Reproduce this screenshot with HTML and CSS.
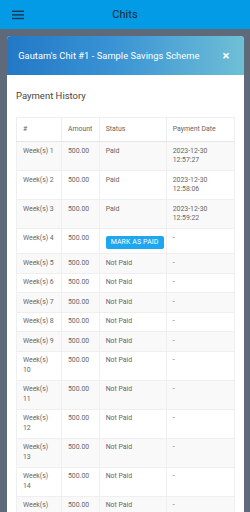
FILE: index.html
```html
<!DOCTYPE html>
<html>
<head>
<meta charset="utf-8">
<link rel="stylesheet" href="styles.css">
</head>
<body>
<header class="topbar">
  <button class="menu-btn" aria-label="Menu">
    <svg width="12" height="10" viewBox="0 0 12 10"><rect x="0" y="0.6" width="12" height="1.4" fill="#1b3550"/><rect x="0" y="4.2" width="12" height="1.4" fill="#1b3550"/><rect x="0" y="7.8" width="12" height="1.4" fill="#1b3550"/></svg>
  </button>
  <h1 class="topbar-title">Chits</h1>
</header>
<div class="overlay">
  <div class="modal">
    <div class="modal-header">
      <h2 class="modal-title">Gautam's Chit #1 - Sample Savings Scheme</h2>
      <span class="close">&times;</span>
    </div>
    <div class="modal-body">
      <h3 class="section-title">Payment History</h3>
      <table class="history">
        <colgroup>
          <col class="c1"><col class="c2"><col class="c3"><col class="c4">
        </colgroup>
        <thead>
          <tr><th>#</th><th>Amount</th><th>Status</th><th>Payment Date</th></tr>
        </thead>
        <tbody>
          <tr><td>Week(s) 1</td><td>500.00</td><td>Paid</td><td>2023-12-30 12:57:27</td></tr>
          <tr><td>Week(s) 2</td><td>500.00</td><td>Paid</td><td>2023-12-30 12:58:06</td></tr>
          <tr><td>Week(s) 3</td><td>500.00</td><td>Paid</td><td>2023-12-30 12:59:22</td></tr>
          <tr><td>Week(s) 4</td><td>500.00</td><td><button class="pay-btn">MARK AS PAID</button></td><td>-</td></tr>
          <tr><td>Week(s) 5</td><td>500.00</td><td>Not Paid</td><td>-</td></tr>
          <tr><td>Week(s) 6</td><td>500.00</td><td>Not Paid</td><td>-</td></tr>
          <tr><td>Week(s) 7</td><td>500.00</td><td>Not Paid</td><td>-</td></tr>
          <tr><td>Week(s) 8</td><td>500.00</td><td>Not Paid</td><td>-</td></tr>
          <tr><td>Week(s) 9</td><td>500.00</td><td>Not Paid</td><td>-</td></tr>
          <tr><td>Week(s) 10</td><td>500.00</td><td>Not Paid</td><td>-</td></tr>
          <tr><td>Week(s) 11</td><td>500.00</td><td>Not Paid</td><td>-</td></tr>
          <tr><td>Week(s) 12</td><td>500.00</td><td>Not Paid</td><td>-</td></tr>
          <tr><td>Week(s) 13</td><td>500.00</td><td>Not Paid</td><td>-</td></tr>
          <tr><td>Week(s) 14</td><td>500.00</td><td>Not Paid</td><td>-</td></tr>
          <tr><td>Week(s) 15</td><td>500.00</td><td>Not Paid</td><td>-</td></tr>
        </tbody>
      </table>
    </div>
  </div>
</div>
</body>
</html>
```
FILE: styles.css
```css
* { box-sizing: border-box; }
html, body { margin: 0; padding: 0; }
body {
  width: 250px;
  height: 512px;
  overflow: hidden;
  font-family: Roboto, "Noto Sans", Arial, sans-serif;
  background: #5e6979;
}
.topbar {
  height: 29px;
  background: #039be5;
  display: flex;
  align-items: center;
}
.menu-btn {
  border: 0;
  background: none;
  padding: 0;
  margin: 0 0 0 12px;
  width: 12px;
  height: 10px;
  display: flex;
}
.topbar-title {
  margin: 0;
  flex: 1;
  text-align: center;
  font-size: 11px;
  font-weight: 400;
  color: #14283c;
  padding-right: 24px;
  line-height: 29px;
  letter-spacing: 0.1px;
}
.overlay {
  padding: 7px 6.5px 0 6.7px;
}
.modal {
  background: #fff;
  border-radius: 4px 4px 0 0;
  overflow: hidden;
  height: 480px;
}
.modal-header {
  height: 39px;
  background: linear-gradient(90deg, #2278c6 0%, #3a93d4 45%, #6fbfd6 100%);
  display: flex;
  align-items: center;
  padding: 0 14px 0 11.5px;
}
.modal-title {
  margin: 0;
  flex: 1;
  color: #fff;
  font-size: 9.3px;
  font-weight: 400;
  letter-spacing: 0.05px;
}
.close {
  color: #fff;
  font-size: 13px;
  font-weight: 700;
  line-height: 1;
}
.modal-body {
  padding: 15px 9.3px 0 9.3px;
}
.section-title {
  margin: 0 0 15px;
  font-size: 9.5px;
  line-height: 12px;
  font-weight: 400;
  color: #454545;
}
.history {
  width: 218px;
  border-collapse: collapse;
  table-layout: fixed;
  font-size: 6.9px;
  color: #666;
  border: 1px solid #eeeeee;
}
.c1 { width: 45px; }
.c2 { width: 37.7px; }
.c3 { width: 67px; }
.c4 { width: 68.3px; }
.history th {
  text-align: left;
  font-weight: 400;
  padding: 6.75px 6px;
  line-height: 9.5px;
  border: 1px solid #eeeeee;
  border-bottom: 1px solid #e6e6e6;
}
.history td {
  padding: 4.5px 6px;
  line-height: 9.5px;
  vertical-align: top;
  border: 1px solid #efefef;
}
.history tbody tr:nth-child(odd) td { background: #f9f9f9; }
.pay-btn {
  display: block;
  margin: 2px 0 0;
  height: 13px;
  padding: 0 5px;
  border: 0;
  border-radius: 2px;
  background: #1ca7f0;
  color: #fff;
  font-family: Roboto, Arial, sans-serif;
  font-size: 7px;
  letter-spacing: 0.1px;
  line-height: 13px;
  white-space: nowrap;
}
```
